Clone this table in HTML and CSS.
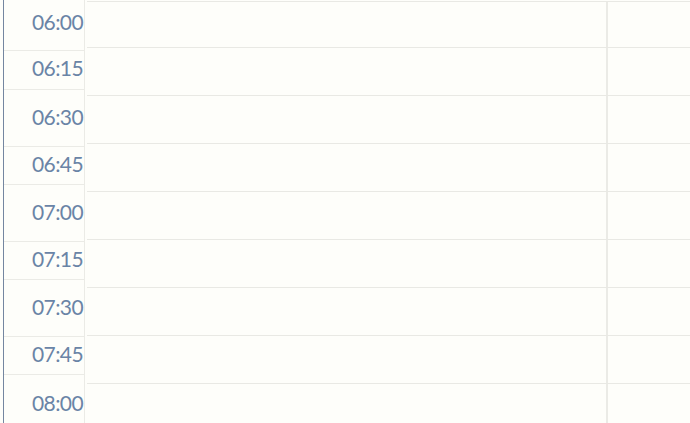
FILE: index.html
```html
<!DOCTYPE html>
<html>
<head>
<meta charset="utf-8">
<link rel="stylesheet" href="styles.css">
</head>
<body>
<div class="sched">
  <div class="times">
    <div class="t first"><span>06:00</span></div>
    <div class="t short s1"><span>06:15</span></div>
    <div class="t long"><span>06:30</span></div>
    <div class="t short"><span>06:45</span></div>
    <div class="t long"><span>07:00</span></div>
    <div class="t short"><span>07:15</span></div>
    <div class="t long"><span>07:30</span></div>
    <div class="t short"><span>07:45</span></div>
    <div class="t last"><span>08:00</span></div>
  </div>
  <div class="grid">
    <div class="row top"><div class="cell main"></div><div class="cell side"></div></div>
    <div class="row"><div class="cell main"></div><div class="cell side"></div></div>
    <div class="row"><div class="cell main"></div><div class="cell side"></div></div>
    <div class="row"><div class="cell main"></div><div class="cell side"></div></div>
    <div class="row"><div class="cell main"></div><div class="cell side"></div></div>
    <div class="row"><div class="cell main"></div><div class="cell side"></div></div>
    <div class="row"><div class="cell main"></div><div class="cell side"></div></div>
    <div class="row"><div class="cell main"></div><div class="cell side"></div></div>
    <div class="row"><div class="cell main"></div><div class="cell side"></div></div>
  </div>
</div>
</body>
</html>
```
FILE: styles.css
```css
html, body {
  margin: 0;
  padding: 0;
  background: #fefefa;
  overflow: hidden;
  height: 423px;
}
.sched {
  display: flex;
  margin-left: 3px;
  border-left: 1px solid #7486a0;
  height: 423px;
  font-family: Lato, "Open Sans", sans-serif;
}
.times {
  width: 80px;
  flex: none;
  display: flex;
  flex-direction: column;
  border-right: 1px solid #ebebe6;
}
.t {
  display: flex;
  align-items: center;
  justify-content: flex-end;
  padding-right: 1px;
  padding-bottom: 4px;
  box-sizing: border-box;
  border-bottom: 1px solid #ebebe6;
  color: #6a84a6;
  font-size: 21px;
  letter-spacing: -0.6px;
  flex: none;
}
.t.first { height: 51px; padding-bottom: 8px; }
.t.short { height: 38px; padding-bottom: 4px; }
.t.s1 { height: 39px; padding-bottom: 6px; }
.t.long { height: 57px; }
.t.last { height: 60px; border-bottom: none; padding-bottom: 6px; }
.grid {
  flex: 1;
  margin-left: 2px;
  display: flex;
  flex-direction: column;
  padding-top: 1px;
}
.row {
  display: flex;
  height: 48px;
  flex: none;
  box-sizing: border-box;
  border-bottom: 1px solid #e9e9e4;
}
.row.top {
  height: 47px;
  border-top: 1px solid #e9e9e4;
}
.cell.main {
  width: 519px;
  flex: none;
  border-right: 2px solid #ebebe6;
}
.cell.side {
  flex: 1;
}
```
